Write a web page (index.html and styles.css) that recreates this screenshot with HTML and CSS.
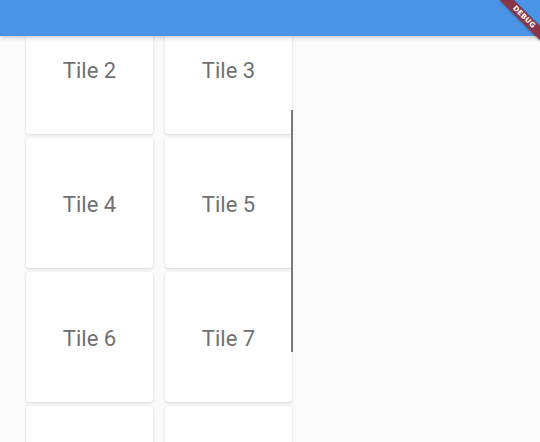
FILE: index.html
```html
<!DOCTYPE html>
<html>
<head>
<meta charset="utf-8">
<link rel="stylesheet" href="styles.css">
</head>
<body>
<div class="screen">
  <div class="grid">
    <div class="tile">Tile 2</div>
    <div class="tile">Tile 3</div>
    <div class="tile">Tile 4</div>
    <div class="tile">Tile 5</div>
    <div class="tile">Tile 6</div>
    <div class="tile">Tile 7</div>
    <div class="tile"></div>
    <div class="tile"></div>
  </div>
  <div class="scrollbar"></div>
  <div class="appbar"></div>
  <div class="debug"><span>DEBUG</span></div>
</div>
</body>
</html>
```
FILE: styles.css
```css
html, body {
  margin: 0;
  padding: 0;
  background: #fafafa;
}
.screen {
  position: relative;
  width: 540px;
  height: 442px;
  overflow: hidden;
  background: #fafafa;
  font-family: Roboto, "Liberation Sans", sans-serif;
}
.grid {
  display: grid;
  grid-template-columns: 127px 127px;
  grid-auto-rows: 130px;
  column-gap: 12px;
  row-gap: 4px;
  padding: 4px 0 0 26px;
}
.tile {
  background: #fff;
  border-radius: 3px;
  box-shadow: 0 1px 3px rgba(0,0,0,0.14), 0 0 1px rgba(0,0,0,0.08);
  display: flex;
  align-items: center;
  justify-content: center;
  padding-top: 2px;
  box-sizing: border-box;
  font-size: 22px;
  color: #707070;
}
.appbar {
  position: absolute;
  top: 0;
  left: 0;
  right: 0;
  height: 36px;
  background: #4994e6;
  box-shadow: 0 2px 4px rgba(0,0,0,0.18);
}
.scrollbar {
  position: absolute;
  left: 291px;
  top: 110px;
  width: 2px;
  height: 242px;
  background: #7a7a7a;
}
.debug {
  position: absolute;
  top: 12px;
  left: 495px;
  width: 58px;
  height: 10px;
  background: #8a3546;
  transform: rotate(45deg);
  display: flex;
  align-items: center;
  justify-content: center;
  box-shadow: 0 1px 2px rgba(0,0,0,0.3);
}
.debug span {
  color: #fff;
  font-family: "DejaVu Sans", sans-serif;
  font-weight: bold;
  font-size: 7px;
  line-height: 1;
  letter-spacing: 0.2px;
}
```
